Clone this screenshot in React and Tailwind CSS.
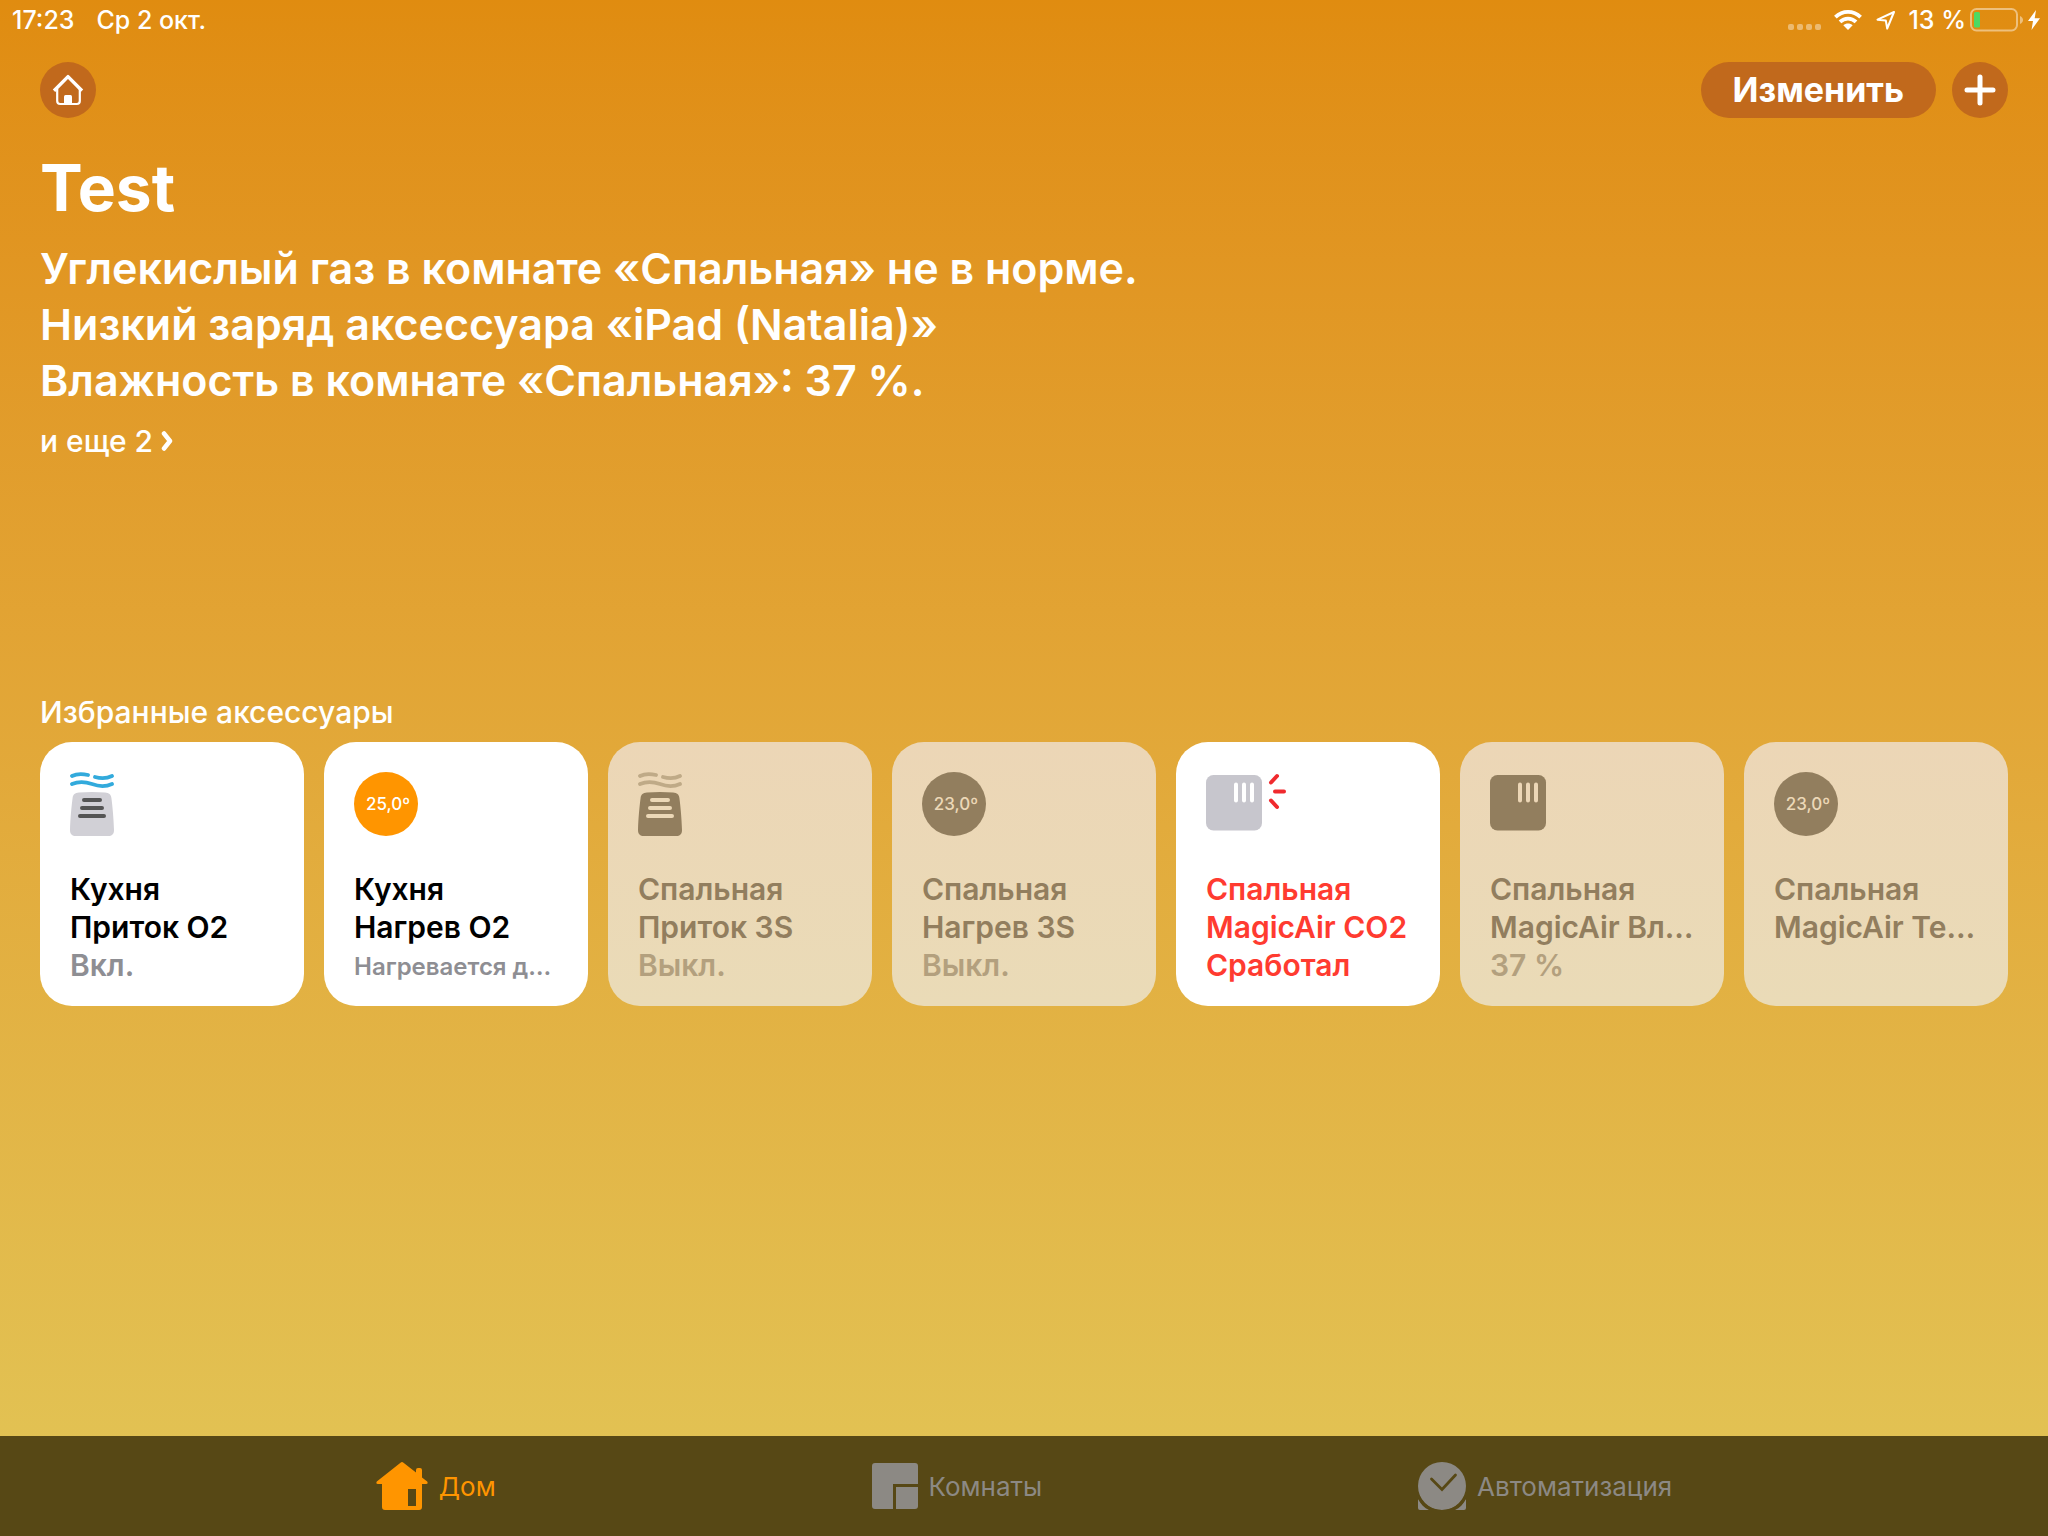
import React from "react";

const messages = [
  "Углекислый газ в комнате «Спальная» не в норме.",
  "Низкий заряд аксессуара «iPad (Natalia)»",
  "Влажность в комнате «Спальная»: 37 %.",
];

const accessories = [
  { room: "Кухня", name: "Приток O2", status: "Вкл.", icon: "purifier", state: "on" },
  { room: "Кухня", name: "Нагрев O2", status: "Нагревается д…", icon: "temp", value: "25,0º", state: "on", small: true },
  { room: "Спальная", name: "Приток 3S", status: "Выкл.", icon: "purifier", state: "off" },
  { room: "Спальная", name: "Нагрев 3S", status: "Выкл.", icon: "temp", value: "23,0º", state: "off" },
  { room: "Спальная", name: "MagicAir CO2", status: "Сработал", icon: "sensor", state: "alert" },
  { room: "Спальная", name: "MagicAir Вл…", status: "37 %", icon: "sensor", state: "off" },
  { room: "Спальная", name: "MagicAir Те…", status: "", icon: "temp", value: "23,0º", state: "off" },
];

const cardStyles = {
  on: { card: "bg-white", title: "text-black", status: "text-[#8e8e93]" },
  off: { card: "bg-linear-to-b from-[#ecd6b6] to-[#eadbb7]", title: "text-[#927e5e]", status: "text-[#b3a07e]" },
  alert: { card: "bg-white", title: "text-[#ff3b30]", status: "text-[#ff3b30]" },
};

function PurifierIcon({ off }) {
  const wave = off ? "#bfaa87" : "#32aadc";
  return (
    <svg viewBox="0 0 44 64" className="h-16 w-11" aria-hidden="true">
      <g fill="none" stroke={wave} strokeWidth="3.8" strokeLinecap="round">
        <path d="M2 4C7 1.500 12 1.500 18 3" />
        <path d="M25 5C31 6.800 37 6.500 42 4" />
        <path d="M2 12C9 9 15 9.500 22 12C29 14.600 36 14.700 42 12" />
      </g>
      <path
        d="M9 20.500C17 19.700 27 19.700 35 20.500C39 20.800 41 22.500 41.400 26C42.500 34 43.600 46 44 58C44 62 42 64 38 64H6C2 64 0 62 0 58C.4 46 1.500 34 2.600 26C3 22.500 5 20.800 9 20.500Z"
        fill={off ? "#927e5e" : "#d1d0d6"}
      />
      <g stroke={off ? "#ecd8b7" : "#545454"} strokeWidth="4" strokeLinecap="round">
        <path d="M14 28H30M12 36H32M10 44H34" />
      </g>
    </svg>
  );
}

function SensorIcon({ off }) {
  return (
    <svg viewBox="0 0 84 64" className="h-16 w-21" aria-hidden="true">
      <rect x="0" y="3" width="56" height="55.500" rx="7.500" fill={off ? "#927e5e" : "#c7c6cd"} />
      <g stroke={off ? "#ecd6b6" : "#fff"} strokeWidth="4" strokeLinecap="round">
        <path d="M30 12.500V28.500M38 12.500V28.500M46 12.500V28.500" />
      </g>
      {!off && (
        <g stroke="#f02a2e" strokeWidth="4" strokeLinecap="round">
          <path d="M65 10.500L71 4M69 19.500H78M65 28.500L71 35" />
        </g>
      )}
    </svg>
  );
}

function AccessoryIcon({ item }) {
  const off = item.state === "off";
  if (item.icon === "purifier") return <PurifierIcon off={off} />;
  if (item.icon === "sensor") return <SensorIcon off={off} />;
  return (
    <span
      className={`flex size-16 items-center justify-center rounded-full pl-1 text-[17px] font-medium ${
        off ? "bg-[#927e5e] text-[#ecd8b7]" : "bg-[#ff9500] text-white"
      }`}
    >
      {item.value}
    </span>
  );
}

function AccessoryCard({ item }) {
  const s = cardStyles[item.state];
  return (
    <button
      type="button"
      className={`flex aspect-square min-w-0 flex-col items-start justify-between rounded-[32px] px-[30px] pt-[30px] pb-[22px] text-left text-[30px] leading-[38px] font-semibold ${s.card}`}
    >
      <AccessoryIcon item={item} />
      <span className={`block w-full whitespace-nowrap ${s.title}`}>
        <span className="block">{item.room}</span>
        <span className="block">{item.name}</span>
        <span className={`block h-[38px] ${item.small ? "text-[24px] leading-[42px]" : ""} ${s.status}`}>
          {item.status}
        </span>
      </span>
    </button>
  );
}

function StatusBar() {
  return (
    <div className="flex h-10 items-center justify-between pr-2 pl-3 text-[25px] leading-[42px] font-medium">
      <div className="flex gap-[22px]">
        <span>17:23</span>
        <span>Ср 2 окт.</span>
      </div>
      <div className="flex items-center">
        <svg viewBox="0 0 34 20" className="mr-3 h-5 w-[34px]" fill="#fff" fillOpacity=".4" aria-hidden="true">
          <rect x="0" y="14" width="6" height="6" rx="2" />
          <rect x="9" y="14" width="6" height="6" rx="2" />
          <rect x="18" y="14" width="6" height="6" rx="2" />
          <rect x="27" y="14" width="6" height="6" rx="2" />
        </svg>
        <svg viewBox="0 0 28 20" className="mr-[14px] h-5 w-7" aria-hidden="true">
          <g fill="none" stroke="#fff" strokeWidth="3.800">
            <path d="M1.400 7.200C8.500 .2 19.500 .2 26.600 7.200" />
            <path d="M6 11.900C10.600 7.500 17.400 7.500 22 11.900" />
          </g>
          <path d="M9.300 15.300C12 12.900 16 12.900 18.700 15.300L14 20Z" fill="#fff" />
        </svg>
        <svg viewBox="0 0 20 20" className="mr-3 h-5 w-5" aria-hidden="true">
          <path d="M18 2L1.500 9.700L9.800 10.500L11.200 18.500Z" fill="none" stroke="#fff" strokeWidth="2" strokeLinejoin="round" />
        </svg>
        <span className="mr-1">13 %</span>
        <svg viewBox="0 0 54 24" className="mr-1 h-6 w-[54px]" aria-hidden="true">
          <rect x="1" y="1" width="46" height="21.500" rx="5.500" fill="none" stroke="#fff" strokeOpacity=".45" strokeWidth="2" />
          <path d="M50 8C54 9.500 54 14.500 50 16Z" fill="#fff" fillOpacity=".45" />
          <rect x="4" y="4" width="6" height="15.500" rx="1.500" fill="#4cd964" />
        </svg>
        <svg viewBox="0 0 12 20" className="h-5 w-3" aria-hidden="true">
          <path d="M8 0L0 11H5L3.500 20L12 8.200H6.700Z" fill="#fff" />
        </svg>
      </div>
    </div>
  );
}

function Tab({ label, active, children }) {
  return (
    <button
      type="button"
      aria-current={active ? "page" : undefined}
      className={`flex items-center gap-[11px] text-[26px] ${active ? "text-[#ff9500]" : "text-[#8c8984]"}`}
    >
      {children}
      {label}
    </button>
  );
}

export default function App() {
  return (
    <div className="flex min-h-screen flex-col bg-linear-to-b from-[#e08c10] to-[#e2c556] font-[Inter,'Noto_Sans',sans-serif] text-white">
      <StatusBar />
      <main className="flex-1 px-10 pt-[22px]">
        <header className="flex h-14 items-center justify-between">
          <button type="button" aria-label="Дом" className="flex size-14 items-center justify-center rounded-full bg-[#c1691c]">
            <svg viewBox="0 0 32 32" className="size-8" fill="none" stroke="#fff" aria-hidden="true">
              <path d="M2 16.800L16 2.600L30 16.800" strokeWidth="3.400" strokeLinejoin="round" />
              <path d="M5.200 15V27Q5.200 30 8.200 30H24.800Q27.800 30 27.800 27V15" strokeWidth="2.200" />
              <path d="M12 30V22.500Q12 21 13.500 21H18.500Q20 21 20 22.500V30Z" fill="#fff" stroke="none" />
            </svg>
          </button>
          <div className="flex gap-4">
            <button type="button" className="h-14 rounded-full bg-[#c1691c] px-8 text-[34px] leading-[56px] font-bold">
              Изменить
            </button>
            <button type="button" aria-label="Добавить" className="flex size-14 items-center justify-center rounded-full bg-[#c1691c]">
              <svg viewBox="0 0 32 32" className="size-8" stroke="#fff" strokeWidth="5" strokeLinecap="round" aria-hidden="true">
                <path d="M16 3V29M3 16H29" />
              </svg>
            </button>
          </div>
        </header>

        <h1 className="mt-[30px] text-[64px] leading-[80px] font-bold">Test</h1>
        <div className="mt-3 text-[43px] leading-[56px] font-semibold">
          {messages.map((m) => (
            <p key={m}>{m}</p>
          ))}
        </div>
        <button type="button" className="mt-[13px] flex items-center gap-2 text-[30px] leading-10 font-medium">
          и еще 2
          <svg viewBox="0 0 12 20" className="h-5 w-3" fill="none" stroke="#fff" strokeWidth="4.500" strokeLinecap="round" strokeLinejoin="round" aria-hidden="true">
            <path d="M3 2.500L9 10L3 17.500" />
          </svg>
        </button>

        <section className="mt-[231px]">
          <h2 className="text-[30px] leading-10 font-medium">Избранные аксессуары</h2>
          <div className="mt-2.5 grid grid-cols-7 gap-5">
            {accessories.map((item) => (
              <AccessoryCard key={item.room + item.name} item={item} />
            ))}
          </div>
        </section>
      </main>

      <nav className="flex h-[100px] items-stretch justify-evenly bg-[#574815]">
        <Tab label="Дом" active>
          <svg viewBox="0 0 52 48" className="h-12 w-[52px]" fill="#ff9500" aria-hidden="true">
            <path
              fillRule="evenodd"
              d="M24.500 .7Q26 -.5 27.500 .7L40 10.500V8Q40 6 42 6H44Q46 6 46 8V15.500L51.200 19.500Q52.500 22 50 22H46V45Q46 48 43 48H9Q6 48 6 45V22H2Q-.5 22 .8 19.500ZM32 27V44H40V27Z"
            />
          </svg>
        </Tab>
        <Tab label="Комнаты">
          <svg viewBox="0 0 46 46" className="h-[46px] w-[46px]" fill="#8c8984" aria-hidden="true">
            <path d="M3 0H43Q46 0 46 3V21H21V46H3Q0 46 0 43V3Q0 0 3 0Z" />
            <path d="M24 24H46V43Q46 46 43 46H24Z" />
          </svg>
        </Tab>
        <Tab label="Автоматизация">
          <svg viewBox="0 0 48 48" className="size-12" aria-hidden="true">
            <path d="M0 37C2.500 42 6.500 46 11 48H2Q0 48 0 46ZM48 37C45.500 42 41.500 46 37 48H46Q48 48 48 46Z" fill="#8c8984" />
            <circle cx="24" cy="24" r="24" fill="#8c8984" />
            <path d="M0 33.500C4 43 13 49.300 24 49.300S44 43 48 33.500" fill="none" stroke="#574815" strokeWidth="2.600" />
            <path d="M13.500 17L24 27.500L37.500 13" fill="none" stroke="#574815" strokeWidth="2.800" strokeLinecap="round" />
          </svg>
        </Tab>
      </nav>
    </div>
  );
}
